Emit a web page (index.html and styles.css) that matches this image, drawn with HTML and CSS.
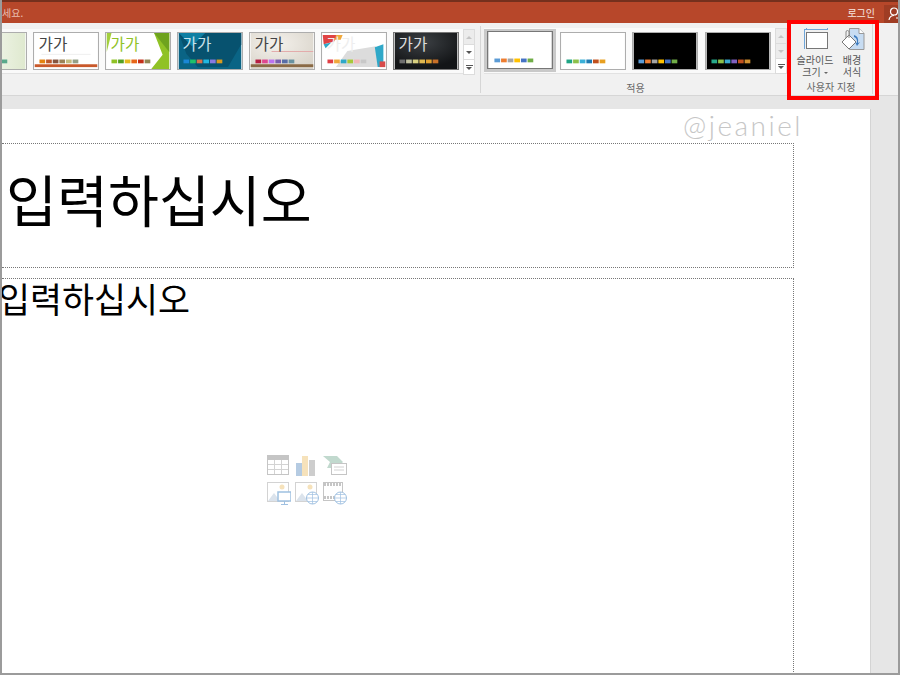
FILE: index.html
```html
<!DOCTYPE html>
<html lang="ko">
<head>
<meta charset="utf-8">
<title>슬라이드 크기</title>
<link rel="stylesheet" href="styles.css">
</head>
<body>
<div class="frame">
  <div class="titlebar">
    <span class="tell">세요.</span>
    <span class="login">로그인</span>
    <span class="user">
      <svg width="14" height="14" viewBox="0 0 14 14"><circle cx="6" cy="4.500" r="3.500" fill="none" stroke="#fff" stroke-width="1.200"/><path d="M1 13c.5-3 2-4.500 5-4.500M8 11h6M11 8.500v5" fill="none" stroke="#fff" stroke-width="1.200"/></svg>
    </span>
  </div>

  <div class="ribbon">
    <div class="group group-themes">
      <div class="gallery">
        <svg class="thumb" width="66" height="38" viewBox="0 0 66 38">
          <defs><linearGradient id="g0" x1="0" x2="1"><stop offset="0" stop-color="#fff"/><stop offset="1" stop-color="#dfe9cf"/></linearGradient></defs>
          <rect width="66" height="38" fill="url(#g0)"/>
          <rect x="41" y="28" width="6" height="4" fill="#5aa98c"/>
        </svg>
        <svg class="thumb" width="66" height="38" viewBox="0 0 66 38">
          <rect width="66" height="38" fill="#fff"/>
          <text x="4" y="18" class="ga" fill="#444">가가</text>
          <rect x="7" y="22" width="52" height="1" fill="#eee"/>
          <rect x="5" y="28" width="6" height="4" fill="#e48312"/><rect x="12" y="28" width="6" height="4" fill="#bd582c"/><rect x="19" y="28" width="6" height="4" fill="#865640"/><rect x="26" y="28" width="6" height="4" fill="#9b8357"/><rect x="33" y="28" width="6" height="4" fill="#c2bc80"/><rect x="40" y="28" width="6" height="4" fill="#94a088"/>
          <rect y="33" width="66" height="3" fill="#c9592b"/>
        </svg>
        <svg class="thumb" width="66" height="38" viewBox="0 0 66 38">
          <rect width="66" height="38" fill="#fff"/>
          <path d="M0 0h5L0 20z" fill="#a3cf3d"/>
          <path d="M50 0h16v38H47l12-15z" fill="#90c226"/>
          <path d="M50 0h16v20z" fill="#6ea31e"/>
          <text x="4" y="18" class="ga" fill="#90c226">가가</text>
          <rect x="5" y="28" width="6" height="4" fill="#90c226"/><rect x="12" y="28" width="6" height="4" fill="#54a021"/><rect x="19" y="28" width="6" height="4" fill="#e6b91e"/><rect x="26" y="28" width="6" height="4" fill="#e76618"/><rect x="33" y="28" width="6" height="4" fill="#c42f1a"/><rect x="40" y="28" width="6" height="4" fill="#918655"/>
        </svg>
        <svg class="thumb" width="66" height="38" viewBox="0 0 66 38">
          <rect width="66" height="38" fill="#0a6485"/>
          <path d="M0 0h66v12L52 36H20L8 22z" fill="#07526f"/>
          <path d="M0 0h28L14 14z" fill="#0f7fa3"/>
          <text x="4" y="18" class="ga" fill="#c9e3ec">가가</text>
          <rect x="5" y="28" width="6" height="4" fill="#1b87d6"/><rect x="12" y="28" width="6" height="4" fill="#1fc16a"/><rect x="19" y="28" width="6" height="4" fill="#d9704a"/><rect x="26" y="28" width="6" height="4" fill="#22b8e0"/><rect x="33" y="28" width="6" height="4" fill="#8a7ae0"/><rect x="40" y="28" width="6" height="4" fill="#d89a20"/>
        </svg>
        <svg class="thumb" width="66" height="38" viewBox="0 0 66 38">
          <defs><radialGradient id="g4" cx=".4" cy=".3" r=".8"><stop offset="0" stop-color="#f4f1ec"/><stop offset="1" stop-color="#d8d3c9"/></radialGradient></defs>
          <rect width="66" height="38" fill="url(#g4)"/>
          <rect x="22" y="19" width="44" height="1" fill="#e3a9a9"/>
          <text x="4" y="18" class="ga" fill="#444">가가</text>
          <rect x="5" y="28" width="6" height="4" fill="#b71e42"/><rect x="12" y="28" width="6" height="4" fill="#de478e"/><rect x="19" y="28" width="6" height="4" fill="#bc72f0"/><rect x="26" y="28" width="6" height="4" fill="#795faf"/><rect x="33" y="28" width="6" height="4" fill="#586ea6"/><rect x="40" y="28" width="6" height="4" fill="#6892a0"/>
          <rect y="33" width="66" height="3" fill="#8a6a45"/>
        </svg>
        <svg class="thumb" width="66" height="38" viewBox="0 0 66 38">
          <rect width="66" height="38" fill="#fff"/>
          <path d="M14 36l12-17 30-5 4 22z" fill="#dcdcdc"/>
          <path d="M55 15l9-3v24h-6z" fill="#2fa8c8"/>
          <path d="M60 30h6v6h-6z" fill="#d84b4b"/>
          <path d="M0 2h16l-4 7L1 12z" fill="#e04444"/>
          <path d="M14 2h7l-2 5h-6z" fill="#f0a83c"/>
          <path d="M1 12l8-2-6 6z" fill="#2fa8c8"/>
          <text x="4" y="18" class="ga" fill="#eee">가가</text>
          <rect x="5" y="28" width="6" height="4" fill="#e03f46"/><rect x="12" y="28" width="6" height="4" fill="#f0a83c"/><rect x="19" y="28" width="6" height="4" fill="#2fa8c8"/><rect x="26" y="28" width="6" height="4" fill="#a8c838"/><rect x="33" y="28" width="6" height="4" fill="#f2b8b8"/><rect x="40" y="28" width="6" height="4" fill="#c8c8c8"/>
        </svg>
        <svg class="thumb thumb-dark" width="66" height="38" viewBox="0 0 66 38">
          <defs><radialGradient id="g6" cx=".45" cy=".25" r=".7"><stop offset="0" stop-color="#3c4044"/><stop offset="1" stop-color="#131517"/></radialGradient></defs>
          <rect width="66" height="38" fill="url(#g6)"/>
          <text x="4" y="18" class="ga" fill="#ddd">가가</text>
          <rect x="5" y="28" width="6" height="4" fill="#6f6f6f"/><rect x="12" y="28" width="6" height="4" fill="#bfbf9f"/><rect x="19" y="28" width="6" height="4" fill="#d8d080"/><rect x="26" y="28" width="6" height="4" fill="#e0b850"/><rect x="33" y="28" width="6" height="4" fill="#e0a030"/><rect x="40" y="28" width="6" height="4" fill="#c87028"/>
        </svg>
      </div>
      <div class="scroller">
        <span class="sbtn off"><i class="up"></i></span>
        <span class="sbtn"><i class="down"></i></span>
        <span class="sbtn more"><i class="down"></i></span>
      </div>
    </div>

    <div class="group group-variants">
      <div class="variant-row">
        <div class="variants">
          <span class="variant curr">
            <svg class="thumb thumb-dark" width="66" height="38" viewBox="0 0 66 38">
              <rect width="66" height="38" fill="#fff"/>
              <rect x="6" y="28" width="6" height="4" fill="#5b9bd5"/><rect x="13" y="28" width="6" height="4" fill="#ed7d31"/><rect x="20" y="28" width="6" height="4" fill="#a5a5a5"/><rect x="27" y="28" width="6" height="4" fill="#ffc000"/><rect x="34" y="28" width="6" height="4" fill="#4472c4"/><rect x="41" y="28" width="6" height="4" fill="#70ad47"/>
            </svg>
          </span>
          <svg class="thumb" width="66" height="38" viewBox="0 0 66 38">
            <rect width="66" height="38" fill="#fff"/>
            <rect x="5" y="28" width="6" height="4" fill="#1fa585"/><rect x="12" y="28" width="6" height="4" fill="#8cc04a"/><rect x="19" y="28" width="6" height="4" fill="#3ab0d8"/><rect x="26" y="28" width="6" height="4" fill="#1e7ab0"/><rect x="33" y="28" width="6" height="4" fill="#c0501e"/><rect x="40" y="28" width="6" height="4" fill="#e8a020"/>
          </svg>
          <svg class="thumb" width="66" height="38" viewBox="0 0 66 38">
            <rect width="66" height="38" fill="#000"/>
            <rect x="5" y="28" width="6" height="4" fill="#5b9bd5"/><rect x="12" y="28" width="6" height="4" fill="#ed7d31"/><rect x="19" y="28" width="6" height="4" fill="#a5a5a5"/><rect x="26" y="28" width="6" height="4" fill="#ffc000"/><rect x="33" y="28" width="6" height="4" fill="#4472c4"/><rect x="40" y="28" width="6" height="4" fill="#70ad47"/>
          </svg>
          <svg class="thumb" width="66" height="38" viewBox="0 0 66 38">
            <rect width="66" height="38" fill="#000"/>
            <rect x="5" y="28" width="6" height="4" fill="#26a88a"/><rect x="12" y="28" width="6" height="4" fill="#8cc04a"/><rect x="19" y="28" width="6" height="4" fill="#3aa8d0"/><rect x="26" y="28" width="6" height="4" fill="#8060c0"/><rect x="33" y="28" width="6" height="4" fill="#c0501e"/><rect x="40" y="28" width="6" height="4" fill="#d09030"/>
          </svg>
        </div>
        <div class="scroller">
          <span class="sbtn off"><i class="up"></i></span>
          <span class="sbtn off"><i class="down"></i></span>
          <span class="sbtn more"><i class="down"></i></span>
        </div>
      </div>
      <div class="group-label">적용</div>
    </div>

    <div class="group group-custom">
      <div class="tools">
        <div class="tool">
          <svg width="26" height="24" viewBox="0 0 26 24">
            <path d="M2 2.500h24M2.500 2v20M4.500 1v2M25.500 1v2" stroke="#6fa5d8" fill="none"/>
            <rect x="4.500" y="5.500" width="21" height="16" fill="#fff" stroke="#777"/>
          </svg>
          <span>슬라이드</span>
          <span>크기<i class="caret"></i></span>
        </div>
        <div class="tool">
          <svg width="26" height="24" viewBox="0 0 26 24">
            <path d="M10.500 1.500H20l5 5v16H10.500z" fill="#c7dcf2" stroke="#999"/>
            <path d="M20 1.500v5h5" fill="#fff" stroke="#999"/>
            <path d="M3 15l7-7 7 7-7 7z" fill="#fff" stroke="#777"/>
            <path d="M7 11V5a1.500 1.500 0 0 1 3 0v6" fill="none" stroke="#888"/>
            <path d="M15 8q5 1 4 8l2-1-3 4-2-4 2 1q.5-5-3-6z" fill="#3d7cc0"/>
          </svg>
          <span>배경</span>
          <span>서식</span>
        </div>
      </div>
      <div class="group-label">사용자 지정</div>
    </div>
    <div class="callout"></div>
  </div>

  <div class="workspace">
    <div class="slide">
      <div class="watermark">@jeaniel</div>
      <div class="ph ph-title">입력하십시오</div>
      <div class="ph ph-body">
        <div class="body-text">입력하십시오</div>
        <div class="ph-icons">
          <svg width="22" height="20" viewBox="0 0 22 20">
            <rect x=".5" y=".5" width="21" height="19" fill="#fff" stroke="#bbb"/>
            <rect x="1" y="1" width="20" height="4" fill="#bbb"/>
            <path d="M1 9.500h20M1 14.500h20M7.500 5v14M14.500 5v14" stroke="#ccc"/>
          </svg>
          <svg width="22" height="22" viewBox="0 0 22 22">
            <rect x="1" y="8" width="6" height="13" fill="#a9c3de"/>
            <rect x="7" y="1" width="6" height="20" fill="#f5deb0"/>
            <rect x="14" y="5" width="6" height="16" fill="#c5c5c5"/>
          </svg>
          <svg width="24" height="20" viewBox="0 0 24 20">
            <path d="M0 1h14l6 6-6 6H4l3-6z" fill="#b7d3c6"/>
            <rect x="8.500" y="8.500" width="15" height="11" fill="#fff" stroke="#bbb"/>
            <path d="M11 12h10M11 15h10" stroke="#ccc"/>
          </svg>
          <svg width="24" height="23" viewBox="0 0 24 23">
            <rect x=".5" y=".5" width="21" height="19" fill="#fff" stroke="#ccc"/>
            <circle cx="15" cy="5" r="2.500" fill="#f5deb0"/>
            <path d="M1 19l6-8 6 8z" fill="#d5dfe9"/>
            <rect x="11" y="10" width="13" height="9" fill="#fff" stroke="#8fb6dc" stroke-width="1.500"/>
            <path d="M17.500 19v3M14 22.500h7" stroke="#8fb6dc"/>
          </svg>
          <svg width="24" height="23" viewBox="0 0 24 23">
            <rect x=".5" y=".5" width="21" height="19" fill="#fff" stroke="#ccc"/>
            <circle cx="15" cy="5" r="2.500" fill="#f5deb0"/>
            <path d="M1 19l6-8 6 8z" fill="#d5dfe9"/>
            <circle cx="17.500" cy="16" r="6" fill="#fff" stroke="#8fb6dc"/>
            <path d="M11.500 16h12M17.500 10v12M13 12.500h9M13 19.500h9" stroke="#8fb6dc" stroke-width=".7" fill="none"/>
          </svg>
          <svg width="24" height="23" viewBox="0 0 24 23">
            <rect x=".5" y=".5" width="19" height="18" fill="#fff" stroke="#bbb"/>
            <path d="M1 2.500h18M1 15.500h18" stroke="#bbb" stroke-width="3" stroke-dasharray="2 1"/>
            <circle cx="17.500" cy="16" r="6" fill="#fff" stroke="#8fb6dc"/>
            <path d="M11.500 16h12M17.500 10v12M13 12.500h9M13 19.500h9" stroke="#8fb6dc" stroke-width=".7" fill="none"/>
          </svg>
        </div>
      </div>
    </div>
  </div>
</div>
</body>
</html>
```

FILE: styles.css
```css
*{margin:0;padding:0;box-sizing:border-box;}
html,body{width:900px;height:675px;overflow:hidden;background:#fff;}
body{font-family:"Noto Sans CJK KR","Liberation Sans",sans-serif;}

.frame{position:relative;display:flex;flex-direction:column;height:675px;border:solid #9b9b9b;border-width:0 2px 2px;overflow:hidden;}

/* title bar */
.titlebar{display:flex;align-items:center;flex:none;height:23px;border-top:2px solid #74301d;background:#b7472a;color:#fff;font-size:10px;}
.tell{color:#e9bfb0;}
.login{margin-left:auto;margin-right:9px;color:#f6e6e0;}
.user{display:flex;align-items:center;flex:none;align-self:flex-end;width:14px;height:18px;padding-left:4px;background:#9f3d24;overflow:hidden;}
.user svg{flex:none;}

/* ribbon */
.ribbon{position:relative;display:flex;flex:none;height:73px;background:#f1f1f1;border-bottom:1px solid #d6d6d6;}
.group{display:flex;flex:none;}
.group-themes{width:478px;height:52px;margin-top:6px;}
.gallery{display:flex;gap:6px;width:461px;height:45px;padding-top:3px;background:#fafafa;border-bottom:1px solid #e2e2e2;overflow:hidden;}
.gallery .thumb:first-child{margin-left:-41px;}
.scroller{display:flex;flex-direction:column;flex:none;width:12px;height:46px;}
.sbtn{display:flex;flex-direction:column;align-items:center;justify-content:center;gap:1px;flex:1;background:#fff;border:1px solid #dcdcdc;border-top-width:0;}
.sbtn:first-child{border-top-width:1px;}
.sbtn.off{background:#ececec;}
.sbtn i{width:0;height:0;border:3px solid transparent;border-bottom-width:0;border-top-color:#555;}
.sbtn.off i{border-top-color:#c4c4c4;}
.sbtn i.up{border-bottom-width:3px;border-top-width:0;border-top-color:transparent;border-bottom-color:#c4c4c4;}
.sbtn.more::before{content:"";width:7px;height:1px;background:#555;}
.thumb{display:block;flex:none;box-sizing:content-box;width:64px;height:36px;border:1px solid #adadad;}
.thumb-dark{border-color:#777;}
.ga{font-size:16.500px;font-family:"Noto Sans CJK KR",sans-serif;font-weight:400;}

.group-variants{flex-direction:column;width:392px;border-left:1px solid #d6d6d6;padding:2px 0 0 3px;margin:3px 0 2px;}
.variant-row{display:flex;height:46px;}
.variants{display:flex;align-items:center;gap:6.500px;width:291px;background:#fafafa;border-bottom:1px solid #e2e2e2;}
.variant.curr{padding:2px 3px 3px;background:#c9c9c9;margin-right:-3px;}
.group-label{color:#666;font-size:10px;line-height:14px;text-align:center;}
.group-variants .group-label{width:303px;margin-top:7px;}

.group-custom{position:absolute;left:788px;top:0;flex-direction:column;width:83px;height:71px;padding-top:4px;border-right:1px solid #d6d6d6;}
.tools{display:flex;gap:5px;height:56px;padding-left:6px;}
.tool{display:flex;flex-direction:column;align-items:center;width:38px;color:#555;font-size:10px;line-height:12px;}
.tool svg{flex:none;margin-bottom:3px;}
.tool + .tool{width:26px;}
.caret{display:inline-block;width:0;height:0;margin-left:3px;vertical-align:2px;border:2.500px solid transparent;border-bottom-width:0;border-top-color:#666;}
.callout{position:absolute;left:785px;top:-3px;width:92px;height:80px;border:4px solid #f00;}

/* slide area */
.workspace{flex:1;min-height:0;padding-top:13px;background:#e6e6e6;}
.slide{position:relative;width:869px;height:100%;padding:34px 76px 0 0;background:#fff;border-right:1px solid #d4d4d4;}
.watermark{position:absolute;right:67px;top:-1px;color:#c6c6c6;font-family:"Lato",sans-serif;font-size:28px;font-weight:300;letter-spacing:2.500px;}
.ph{border:1px dotted #777;border-left:0;}
.ph-title{height:125px;padding:18px 0 0 4px;color:#000;font-size:55.400px;line-height:72px;white-space:nowrap;}
.ph-body{height:420px;margin-top:10px;border-bottom:0;}
.body-text{margin-left:-4px;color:#000;font-size:34.800px;line-height:38px;white-space:nowrap;}
.ph-icons{display:grid;grid-template-columns:repeat(3,24px);gap:5px 4px;width:82px;margin:138px 0 0 265px;opacity:.85;}
```
